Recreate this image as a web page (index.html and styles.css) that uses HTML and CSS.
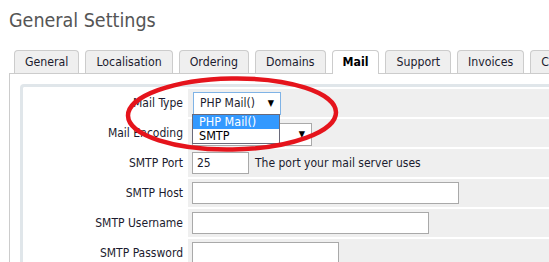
FILE: index.html
```html
<!DOCTYPE html>
<html>
<head>
<meta charset="utf-8">
<link rel="stylesheet" href="styles.css">
</head>
<body>
<div class="page">
  <h1 class="title">General Settings</h1>
  <div class="tabs">
    <div class="tab">General</div>
    <div class="tab">Localisation</div>
    <div class="tab">Ordering</div>
    <div class="tab">Domains</div>
    <div class="tab active">Mail</div>
    <div class="tab">Support</div>
    <div class="tab">Invoices</div>
    <div class="tab">Credit</div>
  </div>
  <div class="panel">
    <div class="inner">
      <div class="form">
        <div class="label">Mail Type</div>
        <div class="field">
          <div class="select focus sel-type"><span>PHP Mail()</span><span class="arrow">&#9660;</span></div>
          <div class="droplist">
            <div class="opt selected">PHP Mail()</div>
            <div class="opt">SMTP</div>
          </div>
        </div>
        <div class="label">Mail Encoding</div>
        <div class="field">
          <div class="select sel-enc"><span></span><span class="arrow">&#9660;</span></div>
        </div>
        <div class="label">SMTP Port</div>
        <div class="field">
          <div class="input w-port">25</div>
          <span class="hint">The port your mail server uses</span>
        </div>
        <div class="label">SMTP Host</div>
        <div class="field"><div class="input w-host"></div></div>
        <div class="label">SMTP Username</div>
        <div class="field"><div class="input w-user"></div></div>
        <div class="label">SMTP Password</div>
        <div class="field"><div class="input w-pass"></div></div>
      </div>
    </div>
  </div>
  <svg class="ring" width="549" height="262" viewBox="0 0 549 262">
    <ellipse cx="232" cy="114" rx="104" ry="35.5" fill="none" stroke="#e5141c" stroke-width="4.5" transform="rotate(-1 232 114)"/>
  </svg>
</div>
</body>
</html>
```

FILE: styles.css
```css
html, body {
  margin: 0;
  padding: 0;
  background: #fff;
  overflow: hidden;
}
body {
  width: 549px;
  height: 262px;
  font-family: "DejaVu Sans Condensed", "DejaVu Sans", sans-serif;
  font-size: 12px;
  color: #1b1b2e;
}
.page {
  position: relative;
  width: 760px;
  height: 262px;
}
.title {
  margin: 0;
  padding: 9px 0 0 9px;
  height: 42px;
  box-sizing: border-box;
  font-size: 19.5px;
  font-weight: normal;
  color: #555;
  line-height: 24px;
}
.tabs {
  display: flex;
  gap: 6px;
  padding-left: 14px;
  height: 23px;
  margin-top: 8px;
  position: relative;
  z-index: 1;
  white-space: nowrap;
}
.tab {
  box-sizing: border-box;
  height: 23px;
  padding: 0 10px;
  border: 1px solid #ccc;
  border-bottom: none;
  border-radius: 4px 4px 0 0;
  background: #efefef;
  line-height: 22px;
  font-size: 12.25px;
  color: #1b1b2e;
}
.tab.active {
  background: #fff;
  font-weight: bold;
  color: #000;
  height: 24px;
  margin-top: -0.5px;
}
.panel {
  margin-left: 9px;
  border-top: 1px solid #ccc;
  border-left: 1px solid #ccc;
  padding: 10px 0 0 10px;
  height: 200px;
}
.inner {
  border: 3px solid #e0e6ea;
  border-radius: 4px;
  border-right: none;
  height: 200px;
}
.form {
  display: grid;
  grid-template-columns: 161px 1fr;
  grid-auto-rows: 28px;
  gap: 2px;
  padding: 2px 0 0 2px;
}
.label {
  display: flex;
  align-items: center;
  justify-content: flex-end;
  padding-right: 3px;
  white-space: nowrap;
}
.field {
  position: relative;
  display: flex;
  align-items: center;
  padding-left: 4px;
  background: #efefef;
  white-space: nowrap;
}
.input {
  box-sizing: border-box;
  height: 22px;
  border: 1px solid #a9a9a9;
  background: #fff;
  padding-left: 4px;
  line-height: 20px;
}
.w-port { width: 57px; }
.w-host { width: 267px; }
.w-user { width: 237px; }
.w-pass { width: 147px; }
.hint {
  margin-left: 6px;
}
.select {
  box-sizing: border-box;
  height: 23px;
  border: 1px solid #a9a9a9;
  background: #fff;
  display: flex;
  align-items: center;
  justify-content: space-between;
  padding: 0 6px 0 6px;
}
.select.focus {
  border-color: #7fb3e6;
}
.sel-type {
  width: 88px;
  margin-left: 1px;
}
.sel-enc {
  width: 120px;
  margin-top: 2px;
}
.arrow {
  font-size: 9px;
  color: #000;
}
.droplist {
  position: absolute;
  left: 4px;
  top: 25px;
  width: 88px;
  box-sizing: border-box;
  border: 1px solid #6a6a7a;
  background: #fff;
  z-index: 2;
}
.opt {
  height: 14px;
  line-height: 14px;
  padding-left: 6px;
  color: #000;
  font-size: 12.5px;
}
.opt.selected {
  background: #3399ff;
  color: #fff;
}
.ring {
  position: absolute;
  left: 0;
  top: 0;
  z-index: 5;
  pointer-events: none;
}
```
